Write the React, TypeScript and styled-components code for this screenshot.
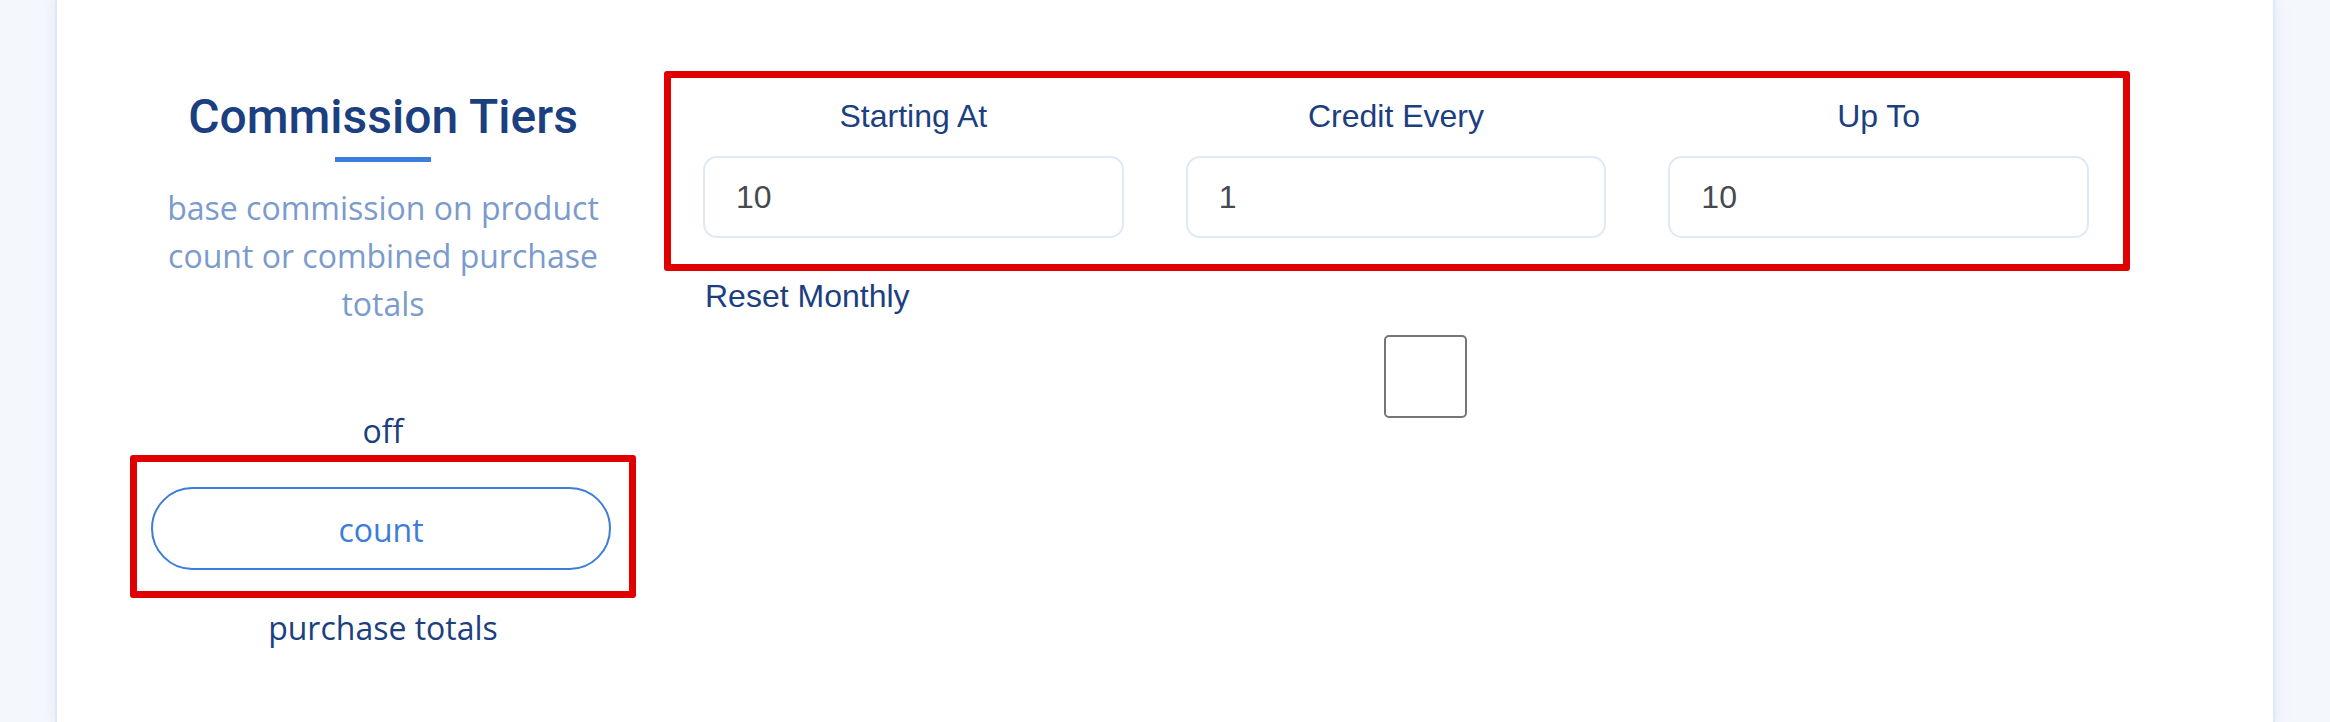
import React from "react";
import styled, { createGlobalStyle } from "styled-components";

const GlobalStyle = createGlobalStyle`
  html, body {
    margin: 0;
    padding: 0;
    background: #f4f7fc;
  }
  body {
    font-family: "Open Sans", "Liberation Sans", sans-serif;
  }
`;

const navy = "#1c3f7f";
const blue = "#3c7cda";

interface Tier {
  label: string;
  value: string;
}

const tiers: Tier[] = [
  { label: "Starting At", value: "10" },
  { label: "Credit Every", value: "1" },
  { label: "Up To", value: "10" },
];

export const App: React.FC = () => {
  return (
    <StyledPage>
      <GlobalStyle />
      <Card>
        <Intro>
          <Title>Commission Tiers</Title>
          <Underline />
          <Description>
            base commission on product count or combined purchase totals
          </Description>
          <ModeLabel $spaced>off</ModeLabel>
          <Highlight>
            <ModeButton type="button">count</ModeButton>
          </Highlight>
          <ModeLabel>purchase totals</ModeLabel>
        </Intro>

        <Settings>
          <TierBox>
            {tiers.map((tier) => (
              <TierField key={tier.label}>
                <FieldLabel>{tier.label}</FieldLabel>
                <FieldInput defaultValue={tier.value} />
              </TierField>
            ))}
          </TierBox>
          <ResetLabel>Reset Monthly</ResetLabel>
          <CheckRow>
            <Checkbox type="checkbox" />
          </CheckRow>
        </Settings>
      </Card>
    </StyledPage>
  );
};

const StyledPage = styled.div`
  min-height: 722px;
  padding-left: 57px;
  width: 2216px;
`;

const Card = styled.div`
  display: flex;
  align-items: flex-start;
  gap: 28px;
  min-height: 722px;
  box-sizing: border-box;
  padding: 71px 86px 0 73px;
  background: #ffffff;
  box-shadow: 0 0 0 2px #e0e8f5, 0 0 14px rgba(170, 190, 225, 0.35);
`;

const Intro = styled.div`
  width: 506px;
  display: flex;
  flex-direction: column;
  align-items: center;
  text-align: center;
  padding-top: 18px;
`;

const Title = styled.h1`
  margin: 0;
  font-family: "Roboto", "Liberation Sans", sans-serif;
  font-weight: 500;
  font-size: 48px;
  line-height: 56px;
  color: ${navy};
`;

const Underline = styled.div`
  width: 96px;
  height: 5px;
  margin-top: 12px;
  background: ${blue};
`;

const Description = styled.p`
  margin: 22px 0 0;
  max-width: 470px;
  font-size: 32px;
  line-height: 48px;
  color: #7b9bcc;
`;

const ModeLabel = styled.div<{ $spaced?: boolean }>`
  margin-top: ${(p) => (p.$spaced ? "79px" : "6px")};
  font-size: 32px;
  line-height: 48px;
  color: ${navy};
`;

const Highlight = styled.div`
  box-sizing: border-box;
  width: 506px;
  padding: 25px 16px 21px 14px;
  border: 7px solid #e00000;
  border-radius: 3px;
`;

const ModeButton = styled.button`
  display: block;
  width: 460px;
  height: 83px;
  padding-top: 2px;
  border: 2px solid ${blue};
  border-radius: 42px;
  background: #ffffff;
  font-family: "Open Sans", sans-serif;
  font-size: 32px;
  color: ${blue};
  cursor: pointer;
`;

const Settings = styled.div`
  flex: 1;
  display: flex;
  flex-direction: column;
`;

const TierBox = styled.div`
  box-sizing: border-box;
  width: 1466px;
  display: grid;
  grid-template-columns: repeat(3, 1fr);
  column-gap: 62px;
  padding: 20px 34px 26px 32px;
  border: 7px solid #e00000;
  border-radius: 3px;
`;

const TierField = styled.label`
  display: flex;
  flex-direction: column;
  align-items: stretch;
  gap: 21px;
`;

const FieldLabel = styled.span`
  font-family: "Liberation Sans", Arial, sans-serif;
  font-size: 32px;
  text-align: center;
  color: ${navy};
`;

const FieldInput = styled.input`
  box-sizing: border-box;
  width: 100%;
  height: 82px;
  padding: 0 0 0 31px;
  border: 2px solid #e0e9f8;
  border-radius: 14px;
  font-family: "Liberation Sans", Arial, sans-serif;
  font-size: 32px;
  color: #464a50;
  outline: none;
`;

const ResetLabel = styled.div`
  margin: 7px 0 0 41px;
  font-family: "Liberation Sans", Arial, sans-serif;
  font-size: 32px;
  color: ${navy};
`;

const CheckRow = styled.div`
  display: flex;
  justify-content: center;
  margin-top: 20px;
`;

const Checkbox = styled.input`
  appearance: none;
  width: 83px;
  height: 83px;
  margin: 0;
  border: 2px solid #767676;
  border-radius: 5px;
  background: #ffffff;
`;

export default App;
